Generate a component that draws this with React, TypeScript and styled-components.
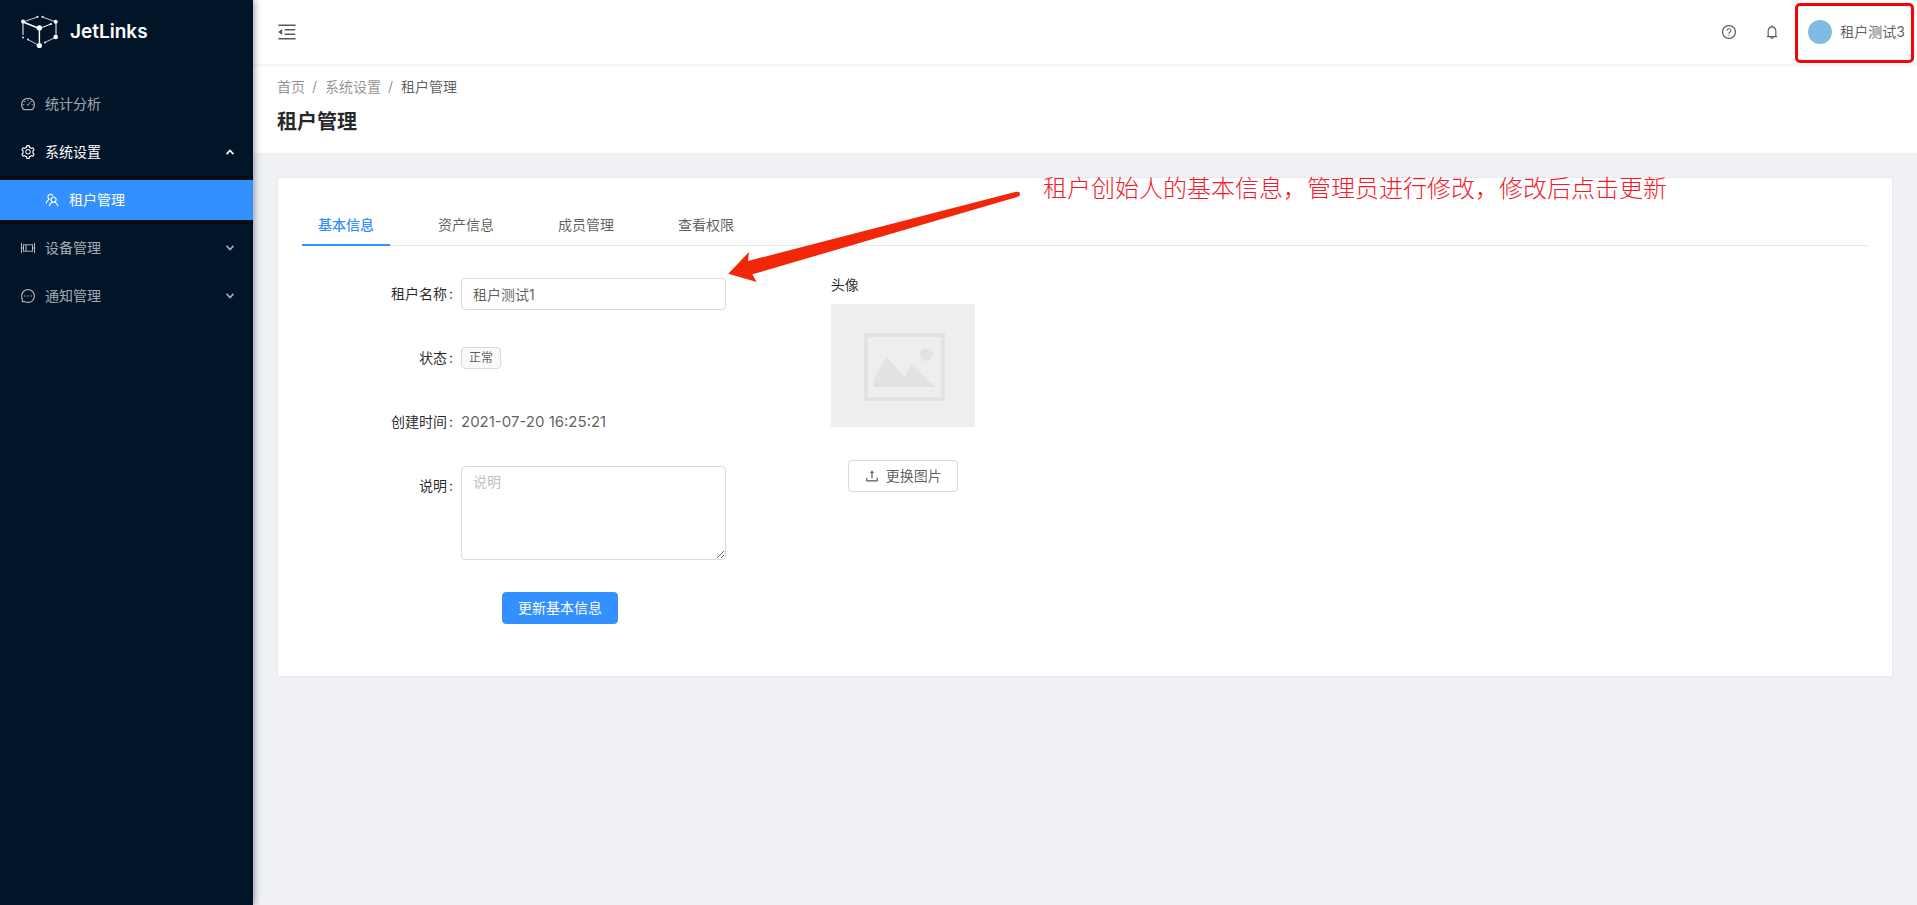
import React, { useState } from "react";
import styled, { createGlobalStyle, css } from "styled-components";
import {
  AiOutlineBell,
  AiOutlineDashboard,
  AiOutlineMenuFold,
  AiOutlineMessage,
  AiOutlineQuestionCircle,
  AiOutlineSetting,
  AiOutlineTeam,
  AiOutlineUpload,
} from "react-icons/ai";

const color = {
  primary: "#3391ff",
  sider: "#011428",
  siderSub: "#010b16",
  page: "#f0f1f5",
  border: "#d9d9d9",
  line: "#e8e8e8",
  heading: "rgba(0, 0, 0, 0.85)",
  text: "rgba(0, 0, 0, 0.65)",
  muted: "rgba(0, 0, 0, 0.45)",
};

const GlobalStyle = createGlobalStyle`
  *, *::before, *::after { box-sizing: border-box; }
  body {
    margin: 0;
    background: ${color.page};
    color: ${color.text};
    font: 14px/22px Inter, "Noto Sans CJK SC", sans-serif;
  }
  button, input, textarea { font: inherit; color: inherit; }
  a { color: inherit; text-decoration: none; }
  ul, ol { list-style: none; margin: 0; padding: 0; }
`;

const Layout = styled.div`
  display: flex;
  min-height: 100vh;
`;

/* ---------- sider ---------- */

const Sider = styled.aside`
  flex: 0 0 253px;
  background: ${color.sider};
  box-shadow: 2px 0 6px rgba(0, 21, 41, 0.35);
  z-index: 2;
`;

const Brand = styled.a`
  display: flex;
  align-items: center;
  gap: 12px;
  height: 64px;
  padding-left: 20px;
  color: #fff;
  font-size: 19px;
  font-weight: 600;
  line-height: 24px;
`;

const Menu = styled.ul`
  padding-top: 16px;
`;

const SubMenu = styled.ul`
  background: ${color.siderSub};
  padding: 4px 0;
`;

const MenuEntry = styled.li`
  padding: 4px 0;

  ${SubMenu} & {
    padding: 0;
  }
`;

const MenuLink = styled.a<{ $open?: boolean; $selected?: boolean; $nested?: boolean }>`
  display: flex;
  align-items: center;
  gap: 9px;
  height: 40px;
  padding: 0 19px 0 ${(p) => (p.$nested ? 44 : 20)}px;
  color: ${(p) => (p.$open || p.$selected ? "#fff" : "rgba(255, 255, 255, 0.65)")};
  background: ${(p) => (p.$selected ? color.primary : "transparent")};

  & > svg:first-child {
    font-size: 16px;
  }
`;

const Caret = styled.svg`
  margin-left: auto;
`;

/* ---------- header ---------- */

const Main = styled.div`
  flex: 1;
  min-width: 0;
`;

const Header = styled.header`
  position: relative;
  display: flex;
  align-items: center;
  height: 64px;
  padding: 0 3px 0 23px;
  background: #fff;
  box-shadow: 0 1px 4px rgba(0, 21, 41, 0.08);
`;

const IconButton = styled.button<{ $size: number }>`
  display: flex;
  padding: 0;
  border: 0;
  background: none;
  font-size: ${(p) => p.$size}px;
  cursor: pointer;
`;

const HeaderTools = styled.div`
  display: flex;
  align-items: center;
  gap: 27px;
  margin-left: auto;
`;

const Account = styled.button`
  display: flex;
  align-items: center;
  gap: 8px;
  height: 60px;
  margin: 2px 0 0 -12px;
  padding: 0 6px 2px 10px;
  border: 3px solid #fb0007;
  border-radius: 5px;
  background: none;
  white-space: nowrap;
`;

const Avatar = styled.span`
  width: 24px;
  height: 24px;
  border-radius: 50%;
  background: #7dbbe3;
`;

/* ---------- page heading ---------- */

const PageHeading = styled.div`
  padding: 12px 24px 15px;
  background: #fff;
`;

const Crumbs = styled.ol`
  display: flex;
  color: ${color.muted};

  li + li::before {
    content: "/";
    padding: 0 8px 0 7px;
    color: ${color.muted};
  }

  li:last-child {
    color: ${color.text};
  }
`;

const Title = styled.h1`
  margin: 8px 0 0;
  color: ${color.heading};
  font-size: 20px;
  font-weight: 600;
  line-height: 32px;
`;

/* ---------- card ---------- */

const Card = styled.section`
  position: relative;
  margin: 24px;
  padding: 24px 24px 52px;
  border: 1px solid ${color.line};
  background: #fff;
`;

const TabBar = styled.div`
  display: flex;
  gap: 32px;
  border-bottom: 1px solid ${color.line};
`;

const Tab = styled.button<{ $active: boolean }>`
  height: 44px;
  margin-bottom: -1px;
  padding: 4px 16px 0;
  border: 0;
  border-bottom: 2px solid transparent;
  background: none;
  cursor: pointer;
  ${(p) =>
    p.$active &&
    css`
      border-color: ${color.primary};
      color: ${color.primary};
      font-weight: 500;
    `}
`;

const Columns = styled.div`
  display: grid;
  grid-template-columns: 1fr 2fr;
  gap: 10px;
  padding-top: 32px;
`;

const Form = styled.form`
  display: flex;
  flex-direction: column;
  gap: 32px;
`;

const Field = styled.div`
  display: flex;
  align-items: flex-start;
`;

const Label = styled.label`
  flex: 0 0 159px;
  padding-right: 8px;
  color: ${color.heading};
  line-height: 32px;
  text-align: right;

  &::after {
    content: ":";
    margin-left: 2px;
  }
`;

const Control = styled.div`
  display: flex;
  align-items: center;
  flex: 0 1 265px;
  min-height: 32px;
`;

const TallControl = styled(Control)`
  margin-top: -4px;
`;

const Timestamp = styled.time`
  font-size: 15px;
`;

const box = css`
  width: 100%;
  border: 1px solid ${color.border};
  border-radius: 4px;
  background: #fff;

  &::placeholder {
    color: #bfbfbf;
  }
`;

const TextInput = styled.input`
  ${box}
  height: 32px;
  padding: 4px 11px;
`;

const TextArea = styled.textarea`
  ${box}
  display: block;
  height: 94px;
  padding: 4px 11px;
  resize: vertical;
`;

const Tag = styled.span`
  padding: 0 7px;
  border: 1px solid ${color.border};
  border-radius: 4px;
  background: #fafafa;
  font-size: 12px;
  line-height: 20px;
`;

const Button = styled.button<{ $primary?: boolean }>`
  display: inline-flex;
  align-items: center;
  gap: 6px;
  height: 32px;
  padding: 0 15px;
  border: 1px solid ${(p) => (p.$primary ? color.primary : color.border)};
  border-radius: 4px;
  background: ${(p) => (p.$primary ? color.primary : "#fff")};
  color: ${(p) => (p.$primary ? "#fff" : "inherit")};
  white-space: nowrap;
  cursor: pointer;

  svg {
    font-size: 16px;
  }
`;

const FormActions = styled.div`
  padding-left: 200px;
`;

const AvatarPanel = styled.div`
  display: flex;
  flex-direction: column;
  align-items: flex-start;
`;

const AvatarLabel = styled.div`
  margin-top: -4px;
  padding-bottom: 8px;
  color: ${color.heading};
`;

const AvatarUpload = styled.div`
  padding: 33px 0 0 17px;
`;

/* ---------- annotation over the card ---------- */

const ArrowMark = styled.svg`
  position: absolute;
  left: 450px;
  top: 13px;
  pointer-events: none;
`;

const Note = styled.p`
  position: absolute;
  left: 765px;
  top: -4px;
  margin: 0;
  color: #f5182a;
  font-size: 24px;
  font-weight: 300;
  line-height: 30px;
  white-space: nowrap;
`;

function LogoMark() {
  return (
    <svg width="38" height="34" viewBox="0 0 38 34" fill="none" stroke="#fff" aria-hidden="true">
      <path d="M3 7 19.400 13.500M19.400 13.500V30.500" strokeWidth="1.400" />
      <path d="M19.400 13.500 31 9M36 7.500V22M3 7V20" strokeWidth="1" />
      <path d="M3 7 17.500 2M22.500 2 36 7M8 24.500 17 29.500M25 27.500 36 22" strokeWidth="0.800" />
      <g fill="#fff" stroke="none">
        <circle cx="3" cy="6.500" r="2" />
        <circle cx="19.400" cy="13" r="2.700" />
        <circle cx="19.400" cy="30.500" r="2.600" />
        <circle cx="35.700" cy="6.700" r="2" />
        <circle cx="35.700" cy="22" r="2.300" />
        <circle cx="17.500" cy="1.800" r="1" />
        <circle cx="22.500" cy="1.800" r="1" />
        <circle cx="31" cy="9" r="1" />
        <circle cx="3" cy="22.500" r="0.900" />
        <circle cx="8" cy="24.500" r="0.900" />
        <circle cx="25" cy="27.500" r="0.900" />
      </g>
    </svg>
  );
}

function DeviceIcon() {
  return (
    <svg width="1em" height="1em" viewBox="0 0 16 16" fill="none" stroke="currentColor" aria-hidden="true">
      <path d="M1.500 3V13M14.500 3V13M3.500 4.800H12.500V11.200H3.500zM6 4.800V11.200" strokeWidth="1.100" />
      <path d="M1.500 8H3.500M12.500 8H14.500" strokeWidth="1" />
    </svg>
  );
}

function MenuCaret({ up }: { up?: boolean }) {
  return (
    <Caret width="8" height="6" viewBox="0 0 8 6" fill="none" stroke="currentColor" strokeWidth="1.700" aria-hidden="true">
      <path d={up ? "M.6 5.200 4 1.500 7.400 5.200" : "M.6 .8 4 4.500 7.400 .8"} />
    </Caret>
  );
}

function Placeholder() {
  return (
    <svg width="144" height="123" viewBox="0 0 144 123" role="img" aria-label="头像">
      <path fill="#edeef0" d="M0 0h144v123H0z" />
      <path fill="none" stroke="#e1e2e4" strokeWidth="4" d="M35 31h77v64H35z" />
      <path fill="#e1e2e4" d="M42.500 83V76L55.500 52.500 73.500 72.500 80.500 61 104.500 83z" />
      <circle cx="95.500" cy="50.500" r="6.500" fill="#e1e2e4" />
    </svg>
  );
}

const tabs = ["基本信息", "资产信息", "成员管理", "查看权限"];

export default function App() {
  const [tab, setTab] = useState(tabs[0]);
  const [name, setName] = useState("租户测试1");

  return (
    <>
      <GlobalStyle />
      <Layout>
        <Sider>
          <Brand href="#">
            <LogoMark />
            JetLinks
          </Brand>
          <nav>
            <Menu>
              <MenuEntry>
                <MenuLink href="#">
                  <AiOutlineDashboard />
                  统计分析
                </MenuLink>
              </MenuEntry>
              <MenuEntry>
                <MenuLink href="#" $open>
                  <AiOutlineSetting />
                  系统设置
                  <MenuCaret up />
                </MenuLink>
              </MenuEntry>
              <SubMenu>
                <MenuEntry>
                  <MenuLink href="#" $selected $nested>
                    <AiOutlineTeam />
                    租户管理
                  </MenuLink>
                </MenuEntry>
              </SubMenu>
              <MenuEntry>
                <MenuLink href="#">
                  <DeviceIcon />
                  设备管理
                  <MenuCaret />
                </MenuLink>
              </MenuEntry>
              <MenuEntry>
                <MenuLink href="#">
                  <AiOutlineMessage />
                  通知管理
                  <MenuCaret />
                </MenuLink>
              </MenuEntry>
            </Menu>
          </nav>
        </Sider>

        <Main>
          <Header>
            <IconButton $size={22} aria-label="收起菜单">
              <AiOutlineMenuFold />
            </IconButton>
            <HeaderTools>
              <IconButton $size={16} aria-label="帮助">
                <AiOutlineQuestionCircle />
              </IconButton>
              <IconButton $size={16} aria-label="通知">
                <AiOutlineBell />
              </IconButton>
              <Account>
                <Avatar />
                租户测试3
              </Account>
            </HeaderTools>
          </Header>

          <PageHeading>
            <Crumbs>
              <li>
                <a href="#">首页</a>
              </li>
              <li>
                <a href="#">系统设置</a>
              </li>
              <li>租户管理</li>
            </Crumbs>
            <Title>租户管理</Title>
          </PageHeading>

          <Card>
            <TabBar role="tablist">
              {tabs.map((t) => (
                <Tab key={t} role="tab" aria-selected={t === tab} $active={t === tab} onClick={() => setTab(t)}>
                  {t}
                </Tab>
              ))}
            </TabBar>
            <Columns>
              <Form onSubmit={(e) => e.preventDefault()}>
                <Field>
                  <Label htmlFor="name">租户名称</Label>
                  <Control>
                    <TextInput id="name" value={name} onChange={(e) => setName(e.target.value)} />
                  </Control>
                </Field>
                <Field>
                  <Label as="span">状态</Label>
                  <Control>
                    <Tag>正常</Tag>
                  </Control>
                </Field>
                <Field>
                  <Label as="span">创建时间</Label>
                  <Control>
                    <Timestamp>2021-07-20 16:25:21</Timestamp>
                  </Control>
                </Field>
                <Field>
                  <Label htmlFor="description">说明</Label>
                  <TallControl>
                    <TextArea id="description" placeholder="说明" />
                  </TallControl>
                </Field>
                <FormActions>
                  <Button type="submit" $primary>
                    更新基本信息
                  </Button>
                </FormActions>
              </Form>
              <AvatarPanel>
                <AvatarLabel>头像</AvatarLabel>
                <Placeholder />
                <AvatarUpload>
                  <Button type="button">
                    <AiOutlineUpload />
                    更换图片
                  </Button>
                </AvatarUpload>
              </AvatarPanel>
            </Columns>

            <ArrowMark width="294" height="93" viewBox="0 0 294 93" aria-hidden="true">
              <path
                fill="#f2270a"
                d="M.3 82.700 21 61 20 70 288 .7Q292 .3 292 3 292 5 290 5.700L24.300 83.300 28.700 91z"
              />
            </ArrowMark>
            <Note>租户创始人的基本信息，管理员进行修改，修改后点击更新</Note>
          </Card>
        </Main>
      </Layout>
    </>
  );
}
